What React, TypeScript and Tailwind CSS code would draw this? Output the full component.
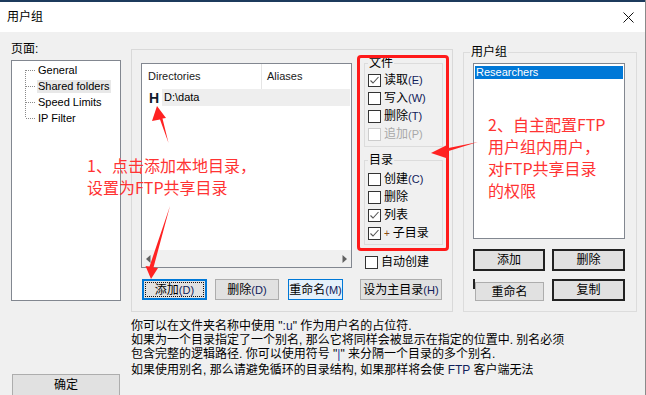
import React from 'react';

const Box = ({ checked, disabled }: { checked?: boolean; disabled?: boolean }) => (
  <span
    className={`w-[13px] h-[13px] shrink-0 border bg-white flex items-center justify-center ${
      disabled ? 'border-[#cccccc]' : 'border-[#333333]'
    }`}
  >
    {checked && (
      <svg width="11" height="11" viewBox="0 0 11 11">
        <path d="M1.5 5.5 L4 8 L9.5 2" fill="none" stroke="#555" strokeWidth="1.1" />
      </svg>
    )}
  </span>
);

const Check = ({
  label,
  hotkey,
  checked,
  disabled,
}: {
  label: React.ReactNode;
  hotkey?: string;
  checked?: boolean;
  disabled?: boolean;
}) => (
  <div className="h-[18px] flex items-center gap-[3px]">
    <Box checked={checked} disabled={disabled} />
    <span className={`text-[12px] leading-[14px] whitespace-nowrap ${disabled ? 'text-[#a8a8a8]' : 'text-black'}`}>
      {label}
      {hotkey && (
        <span className={`text-[11px] ${disabled ? 'text-[#a8a8a8]' : 'text-[#10205a]'}`}>({hotkey})</span>
      )}
    </span>
  </div>
);

const treeItems = ['General', 'Shared folders', 'Speed Limits', 'IP Filter'];

const TreeLine = ({ pos }: { pos: 'first' | 'mid' | 'last' }) => (
  <svg width="12" height="16" className="shrink-0">
    <line
      x1="0.5"
      x2="0.5"
      y1={pos === 'first' ? 8 : 0}
      y2={pos === 'last' ? 8 : 16}
      stroke="#8a8a8a"
      strokeDasharray="1 1"
    />
    <line x1="1" x2="10" y1="8.5" y2="8.5" stroke="#8a8a8a" strokeDasharray="1 1" />
  </svg>
);

const App: React.FC = () => {
  return (
    <div className="w-[646px] h-[395px] relative overflow-hidden bg-[#f0f0f0] border-r border-[#8a8a8a] font-['Liberation_Sans','Noto_Sans_CJK_SC',sans-serif] text-black">
      {/* title bar */}
      <div className="h-[32px] bg-white border-t-2 border-[#1c3a5c] flex items-center justify-between pl-[7px] pr-[11px]">
        <span className="text-[12px] leading-[14px]">用户组</span>
        <svg width="11" height="11" viewBox="0 0 11 11">
          <path d="M0.5 0.5 L10.5 10.5 M10.5 0.5 L0.5 10.5" stroke="#111" strokeWidth="1" />
        </svg>
      </div>

      <div className="flex">
        {/* left: pages */}
        <div className="pl-[11px] flex flex-col shrink-0">
          <div className="mt-[10px] text-[12px] leading-[14px]">页面:</div>
          <div className="mt-[4px] w-[110px] h-[241px] bg-white border border-[#828790] pt-[1px] pl-[13px]">
            {treeItems.map((t, i) => (
              <div key={t} className="h-[16px] flex items-center">
                <TreeLine pos={i === 0 ? 'first' : i === treeItems.length - 1 ? 'last' : 'mid'} />
                <span
                  className={`text-[11px] leading-[13px] px-[1px] whitespace-nowrap ${
                    i === 1 ? 'bg-[#e8e8e8]' : ''
                  }`}
                >
                  {t}
                </span>
              </div>
            ))}
          </div>
          <button className="mt-[73px] ml-[1px] w-[108px] h-[22px] bg-[#e1e1e1] border border-[#adadad] text-[12px] leading-[14px]">
            确定
          </button>
        </div>

        {/* middle: shared folders */}
        <div className="ml-[10px] pt-[17px] w-[322px] shrink-0 flex flex-col">
          <div className="w-[322px] h-[263px] border border-[#d9d9d9] pl-[9px] pt-[6px] flex flex-col">
            <div className="flex items-start">
              <div className="mt-[7px] w-[211px] h-[205px] bg-white border border-[#828790] flex flex-col">
                <div className="h-[25px] flex items-center text-[11px] leading-[13px] text-[#1a1a1a]">
                  <div className="w-[120px] h-full border-r border-[#e5e5e5] pl-[6px] flex items-center">Directories</div>
                  <div className="pl-[5px]">Aliases</div>
                </div>
                <div className="h-[17px] flex items-center pl-[7px]">
                  <span className="w-[13px] text-[14px] leading-[16px] font-bold text-[#0f1b2c]">H</span>
                  <span className="flex-1 mr-[1px] h-full bg-[#eeeeee] pl-[2px] flex items-center text-[11px] leading-[13px]">
                    D:\data
                  </span>
                </div>
                <div className="mt-auto h-[17px] bg-[#f0f0f0] flex items-center justify-between px-[4px]">
                  <svg width="5" height="8" viewBox="0 0 5 8">
                    <path d="M4.5 0 L0 4 L4.5 8 Z" fill="#606060" />
                  </svg>
                  <svg width="5" height="8" viewBox="0 0 5 8">
                    <path d="M0.5 0 L5 4 L0.5 8 Z" fill="#606060" />
                  </svg>
                </div>
              </div>

              <div className="ml-[12px] flex flex-col">
                <fieldset className="w-[79px] border border-[#dcdcdc] pl-[3px] pt-[1px] pb-[3px]">
                  <legend className="text-[12px] leading-[14px] px-[1px]">文件</legend>
                  <Check label="读取" hotkey="E" checked />
                  <Check label="写入" hotkey="W" />
                  <Check label="删除" hotkey="T" />
                  <Check label="追加" hotkey="P" disabled />
                </fieldset>
                <fieldset className="mt-[6px] w-[79px] border border-[#dcdcdc] pl-[3px] pt-[3px] pb-[2px]">
                  <legend className="text-[12px] leading-[14px] px-[1px]">目录</legend>
                  <Check label="创建" hotkey="C" />
                  <Check label="删除" />
                  <Check label="列表" checked />
                  <Check
                    label={
                      <>
                        <span className="text-[10px] text-[#8a4a10]">+</span>
                        <span className="ml-[3px]">子目录</span>
                      </>
                    }
                    checked
                  />
                </fieldset>
                <div className="mt-[8px] ml-[1px]">
                  <Check label="自动创建" />
                </div>
              </div>
            </div>

            <div className="mt-[8px] flex text-[12px] leading-[14px] whitespace-nowrap">
              <button className="ml-[1px] w-[65px] h-[21px] bg-[#e1e1e1] border-2 border-[#0078d7] p-[1px]">
                <span className="w-full h-full flex items-center justify-center border border-dotted border-[#111]">
                  添加<span className="text-[11px] text-[#10205a]">(D)</span>
                </span>
              </button>
              <button className="ml-[8px] w-[64px] h-[21px] bg-[#e1e1e1] border border-[#adadad]">
                删除<span className="text-[11px] text-[#10205a]">(D)</span>
              </button>
              <button className="ml-[9px] w-[55px] h-[21px] px-0 bg-[#e5f1fb] border border-[#0078d7] flex items-center justify-center">
                重命名<span className="text-[11px] text-[#10205a]">(M)</span>
              </button>
              <button className="ml-[17px] w-[82px] h-[21px] bg-[#e1e1e1] border border-[#adadad]">
                设为主目录<span className="text-[11px] text-[#10205a]">(H)</span>
              </button>
            </div>
          </div>

          <div className="mt-[7px] text-[12px] leading-[14px] whitespace-nowrap">
            <p>你可以在文件夹名称中使用 "<span className="text-[#10205a]">:u</span>" 作为用户名的占位符.</p>
            <p>如果为一个目录指定了一个别名, 那么它将同样会被显示在指定的位置中. 别名必须</p>
            <p>包含完整的逻辑路径. 你可以使用符号 "<span className="text-[#1a3a9a]">|</span>" 来分隔一个目录的多个别名.</p>
            <p className="mt-[2px]">
              如果使用别名, 那么请避免循环的目录结构, 如果那样将会使 <span className="text-[#10205a]">FTP</span> 客户端无法
            </p>
          </div>
        </div>

        {/* right: user groups */}
        <fieldset className="ml-[10px] mt-[13px] w-[174px] h-[267px] shrink-0 border border-[#dcdcdc] pl-[9px] pt-[4px]">
          <legend className="text-[12px] leading-[14px] -ml-[3px] px-[1px]">用户组</legend>
          <div className="w-[152px] h-[176px] bg-white border border-[#828790] p-[1px] pt-[2px]">
            <div className="h-[13px] bg-[#0078d7] text-white text-[11px] leading-[13px] pl-[1px]">Researchers</div>
          </div>
          <div className="mt-[10px] flex gap-[7px] text-[12px] leading-[14px]">
            <button className="w-[72px] h-[22px] bg-[#e1e1e1] border-2 border-[#222]">添加</button>
            <button className="w-[73px] h-[22px] bg-[#e1e1e1] border-2 border-[#222]">删除</button>
          </div>
          <div className="mt-[8px] flex gap-[7px] text-[12px] leading-[14px]">
            <div className="relative w-[72px] h-[22px] pl-[2px] pt-[3px]">
              <span className="absolute left-0 top-0 w-[2px] h-[10px] bg-[#222]" />
              <button className="w-[69px] h-[19px] bg-[#e1e1e1] border border-[#adadad]">重命名</button>
            </div>
            <button className="w-[73px] h-[22px] bg-[#e1e1e1] border-2 border-[#222]">复制</button>
          </div>
        </fieldset>
      </div>

      {/* annotations */}
      <div className="absolute left-[357px] top-[55px] w-[92px] h-[196px] border-[3px] border-[#ff1a1a] rounded-[4px] pointer-events-none" />
      <div className="absolute left-[87px] top-[154px] text-[16px] leading-[22px] text-[#ff3333] font-['Noto_Sans_CJK_SC',sans-serif] whitespace-nowrap pointer-events-none">
        <p>1、点击添加本地目录，</p>
        <p>设置为FTP共享目录</p>
      </div>
      <div className="absolute left-[488px] top-[113px] text-[16px] leading-[22px] text-[#ff3333] font-['Noto_Sans_CJK_SC',sans-serif] whitespace-nowrap pointer-events-none">
        <p>2、自主配置FTP</p>
        <p>用户组内用户，</p>
        <p>对FTP共享目录</p>
        <p>的权限</p>
      </div>
      <svg className="absolute left-0 top-0 pointer-events-none" width="646" height="395">
        <polygon points="157,106 166,118 162.5,118.5 168.5,143 160,119.5 152,121" fill="#ff2222" />
        <polygon points="151,279 145.5,266 149.5,266.5 170,206 153.5,267.5 158,268" fill="#ff2222" />
        <polygon points="431,153 447,145 446,148.5 478,142 447,151.5 449,159" fill="#ff2222" />
      </svg>
    </div>
  );
};

export default App;
